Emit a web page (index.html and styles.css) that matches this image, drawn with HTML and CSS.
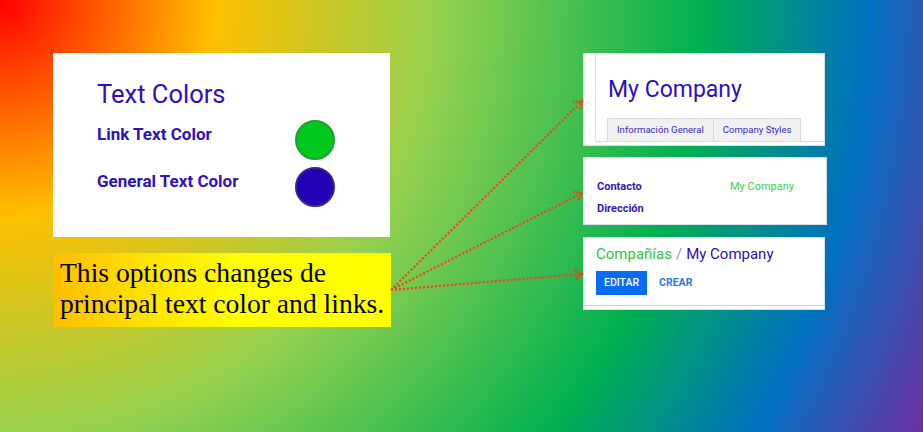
FILE: index.html
```html
<!DOCTYPE html>
<html lang="es">
<head>
<meta charset="utf-8">
<title>Text Colors</title>
<link rel="stylesheet" href="styles.css">
</head>
<body>
<div class="page">
  <div class="left">
    <div class="colors-card">
      <div class="colors-title">Text Colors</div>
      <div class="color-row row-first"><span class="color-label">Link Text Color</span><span class="swatch swatch-green"></span></div>
      <div class="color-row row-second"><span class="color-label">General Text Color</span><span class="swatch swatch-blue"></span></div>
    </div>
    <div class="note">This options changes de principal text color and links.</div>
  </div>
  <div class="right">
    <div class="shot shot-form">
      <div class="sheet">
        <div class="company-name">My Company</div>
        <div class="tabs"><span class="tab">Información General</span><span class="tab">Company Styles</span></div>
      </div>
    </div>
    <div class="shot shot-fields">
      <span class="field-label">Contacto</span><span class="field-link">My Company</span>
      <span class="field-label">Dirección</span><span></span>
    </div>
    <div class="shot shot-panel">
      <div class="crumbs"><span class="crumb-link">Compañías</span><span class="crumb-sep">/</span><span class="crumb-current">My Company</span></div>
      <div class="buttons"><span class="btn-primary">EDITAR</span><span class="btn-link">CREAR</span></div>
    </div>
  </div>
  <svg class="arrows" width="923" height="432" viewBox="0 0 923 432">
    <g class="arrow-line">
      <line x1="391" y1="290" x2="582" y2="101"/>
      <line x1="391" y1="290" x2="582" y2="193"/>
      <line x1="391" y1="290" x2="582" y2="274"/>
    </g>
    <g class="arrow-head">
      <polyline points="573.1,102.5 582,101 580.4,109.9"/>
      <polyline points="573.1,191.7 582,193 577.8,200.9"/>
      <polyline points="574.2,269.5 582,274 575.1,279.8"/>
    </g>
  </svg>
</div>
</body>
</html>
```
FILE: styles.css
```css
html, body {
  margin: 0;
  padding: 0;
}
body {
  width: 923px;
  height: 432px;
  overflow: hidden;
  font-family: Roboto, "Liberation Sans", Arial, sans-serif;
  background: radial-gradient(circle farthest-corner at 0 0,
    #ff0000 0px, #ffc000 215px, #92d050 445px, #00b050 700px, #0070c0 870px, #7030a0 1019px);
}
.page {
  position: relative;
  width: 923px;
  height: 432px;
  display: flex;
  padding: 53px 0 0 53px;
  box-sizing: border-box;
  gap: 192px;
}
.left {
  width: 338px;
  display: flex;
  flex-direction: column;
}
.colors-card {
  width: 337px;
  height: 184px;
  background: #ffffff;
  box-sizing: border-box;
  padding: 26px 55px 0 44px;
}
.colors-title {
  font-size: 25.5px;
  line-height: 30px;
  color: #2c10c2;
}
.color-row {
  display: flex;
  justify-content: space-between;
  align-items: flex-start;
  height: 40px;
}
.row-first { margin-top: 11px; }
.row-second { margin-top: 7px; }
.color-label {
  font-size: 17px;
  line-height: 20px;
  font-weight: 700;
  color: #2e14bb;
  margin-top: 4px;
}
.swatch {
  width: 40px;
  height: 40px;
  border-radius: 50%;
  box-sizing: border-box;
}
.swatch-green {
  background: #00c81c;
  border: 2px solid #20a034;
}
.swatch-blue {
  background: #2300b6;
  border: 2px solid #3a2492;
}
.note {
  margin-top: 16px;
  width: 338px;
  height: 74px;
  box-sizing: border-box;
  padding: 4px 0 0 7px;
  background: linear-gradient(to right, #ffbe00 0%, #ffe600 30%, #ffff00 55%);
  font-family: "Liberation Serif", "Times New Roman", serif;
  font-size: 27.6px;
  line-height: 31px;
  color: #000000;
}
.right {
  width: 244px;
  display: flex;
  flex-direction: column;
}
.shot {
  background: #ffffff;
  border: 1px solid #d4e0ea;
  box-sizing: border-box;
}
.shot-form {
  width: 242px;
  height: 93px;
  display: flex;
  padding-bottom: 3px;
}
.sheet {
  flex: 1;
  margin-left: 11px;
  border-left: 1px solid #e2e2e2;
  padding-top: 22px;
  display: flex;
  flex-direction: column;
}
.company-name {
  font-size: 23px;
  line-height: 27px;
  color: #2c10c2;
  padding-left: 12px;
}
.tabs {
  margin-top: 15px;
  padding-left: 11px;
  display: flex;
  border-bottom: 1px solid #dadada;
}
.tab {
  height: 22px;
  line-height: 22px;
  padding: 0 9px;
  background: #f1f1f1;
  border: 1px solid #d8d8d8;
  border-bottom: none;
  font-size: 9.6px;
  color: #3b2bbd;
}
.tab + .tab {
  border-left: none;
}
.shot-fields {
  width: 244px;
  height: 68px;
  margin-top: 11px;
  padding: 18px 0 0 13px;
  display: grid;
  grid-template-columns: 133px 1fr;
  grid-auto-rows: 22px;
  font-size: 11px;
  line-height: 22px;
}
.field-label {
  font-weight: 700;
  color: #3519b5;
}
.field-link {
  color: #3fcf3f;
}
.shot-panel {
  width: 242px;
  height: 73px;
  margin-top: 12px;
  padding-bottom: 3px;
}
.crumbs {
  padding: 6px 0 0 12px;
  font-size: 15px;
  line-height: 20px;
}
.crumb-link { color: #35c23f; }
.crumb-sep { color: #9a9a9a; margin: 0 4px; }
.crumb-current { color: #2c12b0; }
.buttons {
  display: flex;
  align-items: center;
  padding: 7px 12px 10px;
  border-bottom: 1px solid #d2d2d2;
}
.btn-primary {
  height: 24px;
  line-height: 24px;
  padding: 0 8px;
  background: #0a6bf6;
  color: #ffffff;
  font-size: 10.5px;
  font-weight: 500;
}
.btn-link {
  margin-left: 12px;
  color: #2f76e8;
  font-size: 10.5px;
  font-weight: 700;
  line-height: 24px;
}
.arrows {
  position: absolute;
  left: 0;
  top: 0;
  pointer-events: none;
}
.arrow-line line {
  stroke: #ff3b1a;
  stroke-width: 2.2;
  stroke-dasharray: 2 2;
  fill: none;
}
.arrow-head polyline {
  stroke: #ff3b1a;
  stroke-width: 2.2;
  stroke-dasharray: 2 1;
  fill: none;
}
```
